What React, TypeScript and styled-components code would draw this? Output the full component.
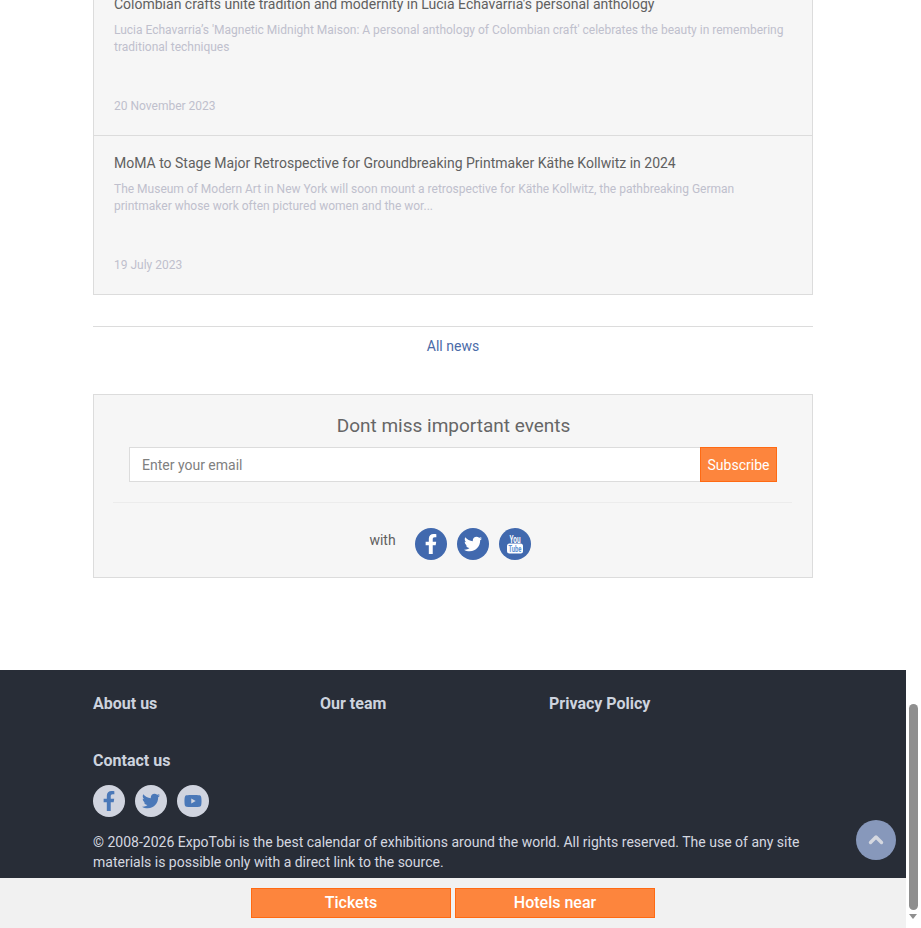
import styled, { createGlobalStyle } from "styled-components";
import { FaFacebookF, FaTwitter, FaYoutube } from "react-icons/fa";

const GlobalStyle = createGlobalStyle`
  html, body {
    margin: 0;
    padding: 0;
    height: 100%;
    overflow: hidden;
    background: #fff;
    font-family: Roboto, "Liberation Sans", sans-serif;
  }
  * { box-sizing: border-box; }
`;

const Shell = styled.div`
  display: flex;
  height: 928px;
  overflow: hidden;
`;

const Page = styled.div`
  width: 906px;
  flex: none;
  overflow: hidden;
`;

const Container = styled.main`
  width: 720px;
  margin: -23px auto 0;
`;

const NewsList = styled.section`
  background: #f6f6f6;
  border: 1px solid #dcdcdc;
  border-top: none;
`;

const NewsItem = styled.article`
  height: 159px;
  padding: 17px 20px 0;
  display: flex;
  flex-direction: column;
  &:first-child {
    height: 158px;
  }
  & + & {
    border-top: 1px solid #dcdcdc;
  }
`;

const NewsTitle = styled.h3`
  margin: 0;
  font-size: 14px;
  line-height: 20px;
  font-weight: 400;
  color: #606060;
`;

const NewsText = styled.p`
  margin: 8px 0 0;
  font-size: 12px;
  line-height: 17px;
  color: #bfc0cd;
`;

const NewsDate = styled.time`
  margin-top: auto;
  margin-bottom: 21px;
  font-size: 12px;
  line-height: 16px;
  color: #bfc0cd;
`;

const AllNews = styled.a`
  display: block;
  margin-top: 31px;
  border-top: 1px solid #dcdcdc;
  padding-top: 11px;
  height: 68px;
  text-align: center;
  font-size: 14px;
  line-height: 17px;
  color: #4a6ba8;
`;

const Subscribe = styled.section`
  height: 184px;
  background: #f6f6f6;
  border: 1px solid #dcdcdc;
  padding: 19px 20px 0 19px;
`;

const SubscribeTitle = styled.h2`
  margin: 0;
  padding-left: 2px;
  font-size: 19px;
  line-height: 24px;
  font-weight: 400;
  text-align: center;
  color: #666;
`;

const SubscribeForm = styled.form`
  display: flex;
  margin: 9px 15px 0 16px;
  height: 35px;
`;

const EmailInput = styled.input`
  flex: 1;
  min-width: 0;
  border: 1px solid #dcdcdc;
  border-right: none;
  background: #fff;
  padding: 0 12px;
  font: 400 14px Roboto, sans-serif;
  color: #555;
  &::placeholder {
    color: #808080;
    opacity: 1;
  }
`;

const SubscribeButton = styled.button`
  width: 77px;
  border: 1px solid #ff6a13;
  background: #fd853d;
  color: #fff;
  padding: 0;
  font: 400 14px Roboto, sans-serif;
`;

const SocialRow = styled.div`
  margin-top: 20px;
  border-top: 1px solid #ececec;
  padding: 25px 5px 0 0;
  display: flex;
  justify-content: center;
  gap: 10px;
`;

const WithLabel = styled.span`
  font-size: 14px;
  line-height: 24px;
  color: #5f5f5f;
  margin-right: 9px;
`;

const SocialLink = styled.a<{ $light?: boolean }>`
  width: 32px;
  height: 32px;
  border-radius: 50%;
  display: flex;
  align-items: center;
  justify-content: center;
  font-size: 20px;
  background: ${({ $light }) => ($light ? "#d0d4df" : "#4169ae")};
  color: ${({ $light }) => ($light ? "#4a78b8" : "#fff")};
`;

const TwitterIcon = styled(FaTwitter)`
  font-size: 18px;
`;

const YoutubeIcon = styled(FaYoutube)`
  font-size: 18px;
`;

const Footer = styled.footer`
  margin-top: 92px;
  height: 258px;
  background: #282d37;
  padding: 24px 93px 0;
`;

const FooterLinks = styled.nav`
  display: grid;
  grid-template-columns: 227px 229px 1fr;
  row-gap: 37px;
`;

const FooterLink = styled.a`
  font-size: 16px;
  line-height: 20px;
  font-weight: 700;
  color: #cdd3de;
`;

const FooterSocial = styled.div`
  display: flex;
  gap: 10px;
  margin-top: 14px;
`;

const Copyright = styled.p`
  margin: 15px 0 0;
  font-size: 14px;
  line-height: 20px;
  color: #d5d8e0;
`;

const BottomBar = styled.div`
  position: fixed;
  left: 0;
  bottom: 0;
  width: 906px;
  height: 50px;
  background: #f1f1f1;
  display: flex;
  justify-content: center;
  align-items: center;
  gap: 4px;
`;

const BarButton = styled.a`
  width: 200px;
  height: 30px;
  border: 1px solid #ff6a13;
  background: #fd853d;
  color: #fff;
  font-size: 16px;
  font-weight: 500;
  line-height: 28px;
  text-align: center;
`;

const ToTop = styled.a`
  position: fixed;
  left: 856px;
  top: 820px;
  width: 40px;
  height: 40px;
  border-radius: 50%;
  background: #8798bb;
  display: flex;
  align-items: center;
  justify-content: center;
  padding-bottom: 2px;
`;

const Scrollbar = styled.div`
  flex: 1;
  position: relative;
  background: #fff;
`;

const ScrollThumb = styled.div`
  position: absolute;
  left: 3px;
  top: 704px;
  width: 9px;
  height: 206px;
  border-radius: 5px;
  background: #8f8f8f;
`;

const ScrollArrow = styled.div`
  position: absolute;
  left: 3px;
  top: 914px;
  border-left: 4.5px solid transparent;
  border-right: 4.5px solid transparent;
  border-top: 5px solid #8f8f8f;
`;

const UpChevron = () => (
  <svg width="16" height="12" viewBox="0 0 16 12">
    <path d="M2.5 9.5 L8 4 L13.5 9.5" fill="none" stroke="#d5d8e0" strokeWidth="3.4" strokeLinecap="round" strokeLinejoin="round" />
  </svg>
);

// the old stacked "You Tube" mark, not in the icon packs
const YoutubeStacked = () => (
  <svg width="32" height="32" viewBox="0 0 32 32">
    <text
      x="16"
      y="14.5"
      textAnchor="middle"
      fontFamily="Roboto, sans-serif"
      fontSize="10"
      fontWeight="700"
      textLength="11"
      lengthAdjust="spacingAndGlyphs"
      fill="#fff"
    >
      You
    </text>
    <rect x="8" y="15.5" width="16" height="10" rx="2.5" fill="#fff" />
    <text
      x="16"
      y="23.8"
      textAnchor="middle"
      fontFamily="Roboto, sans-serif"
      fontSize="9.5"
      fontWeight="700"
      textLength="13"
      lengthAdjust="spacingAndGlyphs"
      fill="#5b93d3"
    >
      Tube
    </text>
  </svg>
);

export default function App() {
  return (
    <>
      <GlobalStyle />
      <Shell>
        <Page>
          <Container>
            <NewsList>
              <NewsItem>
                <NewsTitle>
                  Colombian crafts unite tradition and modernity in Lucia Echavarria's personal anthology
                </NewsTitle>
                <NewsText>
                  Lucia Echavarria’s 'Magnetic Midnight Maison: A personal anthology of Colombian craft' celebrates
                  the beauty in remembering traditional techniques
                </NewsText>
                <NewsDate>20 November 2023</NewsDate>
              </NewsItem>
              <NewsItem>
                <NewsTitle>
                  MoMA to Stage Major Retrospective for Groundbreaking Printmaker Käthe Kollwitz in 2024
                </NewsTitle>
                <NewsText>
                  The Museum of Modern Art in New York will soon mount a retrospective for Käthe Kollwitz, the
                  pathbreaking German printmaker whose work often pictured women and the wor...
                </NewsText>
                <NewsDate>19 July 2023</NewsDate>
              </NewsItem>
            </NewsList>
            <AllNews>All news</AllNews>
            <Subscribe>
              <SubscribeTitle>Dont miss important events</SubscribeTitle>
              <SubscribeForm>
                <EmailInput placeholder="Enter your email" />
                <SubscribeButton type="button">Subscribe</SubscribeButton>
              </SubscribeForm>
              <SocialRow>
                <WithLabel>with</WithLabel>
                <SocialLink>
                  <FaFacebookF />
                </SocialLink>
                <SocialLink>
                  <TwitterIcon />
                </SocialLink>
                <SocialLink>
                  <YoutubeStacked />
                </SocialLink>
              </SocialRow>
            </Subscribe>
          </Container>
          <Footer>
            <FooterLinks>
              <FooterLink>About us</FooterLink>
              <FooterLink>Our team</FooterLink>
              <FooterLink>Privacy Policy</FooterLink>
              <FooterLink>Contact us</FooterLink>
            </FooterLinks>
            <FooterSocial>
              <SocialLink $light>
                <FaFacebookF />
              </SocialLink>
              <SocialLink $light>
                <TwitterIcon />
              </SocialLink>
              <SocialLink $light>
                <YoutubeIcon />
              </SocialLink>
            </FooterSocial>
            <Copyright>
              © 2008-2026 ExpoTobi is the best calendar of exhibitions around the world. All rights reserved. The use
              of any site materials is possible only with a direct link to the source.
            </Copyright>
          </Footer>
        </Page>
        <Scrollbar>
          <ScrollThumb />
          <ScrollArrow />
        </Scrollbar>
      </Shell>
      <ToTop>
        <UpChevron />
      </ToTop>
      <BottomBar>
        <BarButton>Tickets</BarButton>
        <BarButton>Hotels near</BarButton>
      </BottomBar>
    </>
  );
}
